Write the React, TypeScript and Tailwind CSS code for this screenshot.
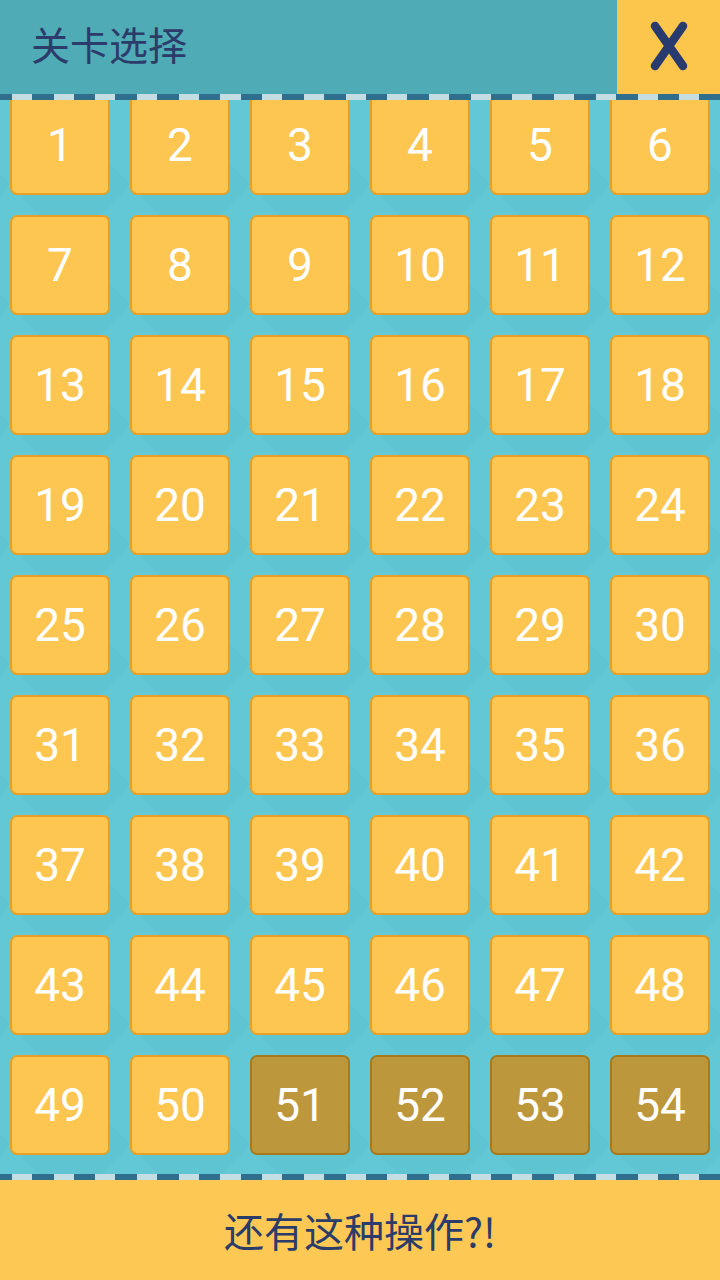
import React from "react";

const levels = Array.from({ length: 54 }, (_, i) => i + 1);
const unlocked = 50;

const cjk = "font-['Noto_Sans_CJK_SC','Noto_Sans',sans-serif]";

function Dashes() {
  return (
    <div className="h-[6px] w-full bg-[#2f6f8d] bg-[repeating-linear-gradient(90deg,#2f6f8d_0px,#2f6f8d_12px,#c3dde3_12px,#c3dde3_32px,#2f6f8d_32px,#2f6f8d_41.7px)]" />
  );
}

function LevelTile({ n }: { n: number }) {
  const locked = n > unlocked;
  return (
    <div
      className={
        locked
          ? "h-[100px] rounded-[7px] border-2 border-[#a67a1c] bg-[#bd973b] flex items-center justify-center"
          : "h-[100px] rounded-[7px] border-2 border-[#e8a126] bg-[#fdc651] flex items-center justify-center"
      }
    >
      <span className="font-['Roboto',sans-serif] text-[46px] leading-none text-white">{n}</span>
    </div>
  );
}

export default function App() {
  return (
    <div className="w-[720px] h-[1280px] flex flex-col overflow-hidden bg-[#62c8d5]">
      <header className="h-[94px] shrink-0 flex items-stretch bg-[#4fabb5]">
        <h1 className={`${cjk} flex-1 flex items-center pl-[31px] pb-[8px] text-[39px] text-[#2c3c6a]`}>
          关卡选择
        </h1>
        <button className="w-[103px] bg-[#fcc54c] flex items-center justify-center pb-[2px]">
          <svg width="44" height="52" viewBox="0 0 44 52">
            <path d="M8 6 L36 46 M36 6 L8 46" stroke="#283a6e" strokeWidth="8.5" strokeLinecap="round" />
          </svg>
        </button>
      </header>
      <Dashes />
      <main className="flex-1 overflow-hidden bg-[linear-gradient(45deg,rgba(0,80,100,0.03)_25%,transparent_25%,transparent_75%,rgba(0,80,100,0.03)_75%),linear-gradient(-45deg,rgba(0,80,100,0.03)_25%,transparent_25%,transparent_75%,rgba(0,80,100,0.03)_75%)] bg-[length:120px_120px] bg-[position:-50px_-35px]">
        <div className="grid grid-cols-6 gap-x-[20px] gap-y-[20px] px-[10px] mt-[-5px]">
          {levels.map((n) => (
            <LevelTile key={n} n={n} />
          ))}
        </div>
      </main>
      <Dashes />
      <footer className={`${cjk} h-[100px] shrink-0 bg-[#fdc853] flex items-center justify-center text-[40px] text-[#2c3c6a]`}>
        还有这种操作?!
      </footer>
    </div>
  );
}
